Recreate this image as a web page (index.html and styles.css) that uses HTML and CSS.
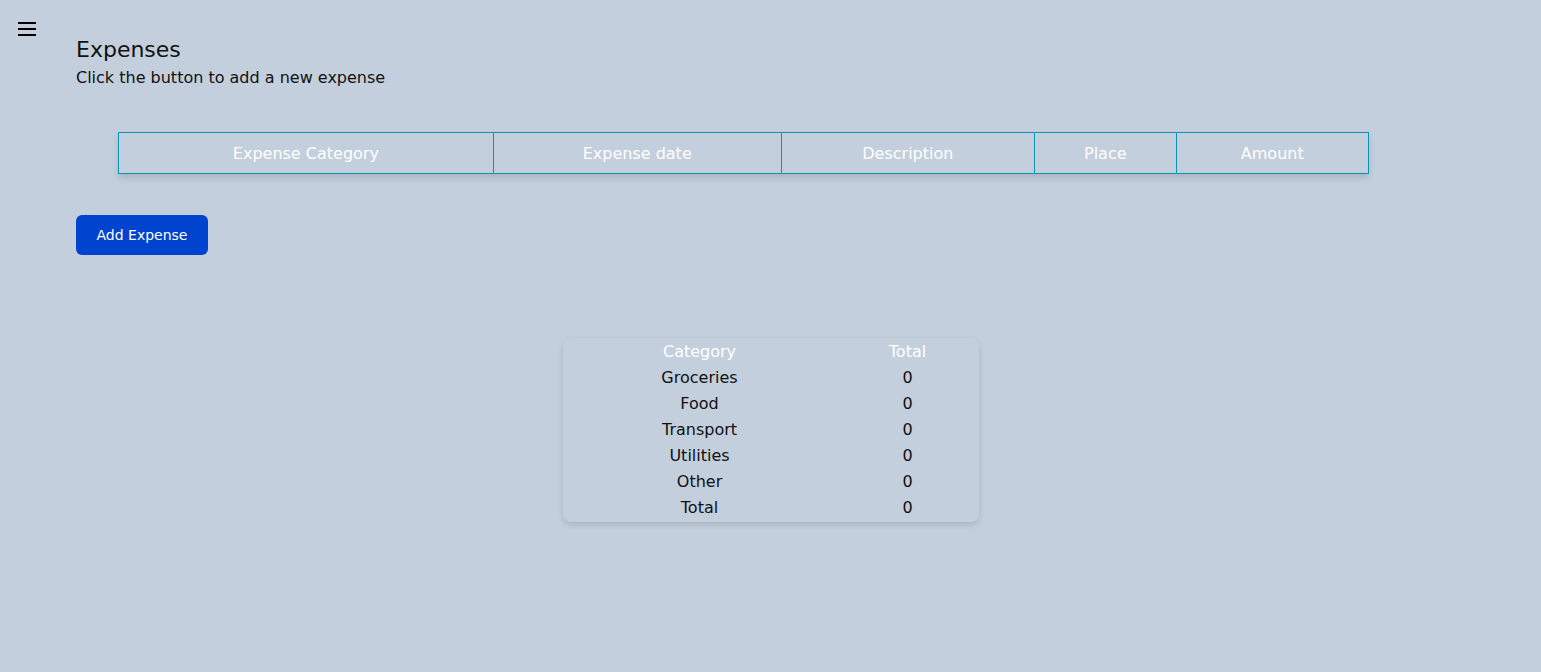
FILE: index.html
```html
<!DOCTYPE html>
<html lang="en">
<head>
<meta charset="utf-8">
<title>Expenses</title>
<link rel="stylesheet" href="styles.css">
</head>
<body>
<div class="page">
  <button class="menu-btn" aria-label="menu">
    <svg width="18" height="15" viewBox="0 0 18 15"><rect x="0" y="0" width="18" height="2" fill="#000"/><rect x="0" y="6" width="18" height="2" fill="#000"/><rect x="0" y="12" width="18" height="2" fill="#000"/></svg>
  </button>
  <main class="content">
    <h1 class="title">Expenses</h1>
    <p class="subtitle">Click the button to add a new expense</p>
    <div class="table-wrap">
      <table class="expense-table">
        <thead>
          <tr>
            <th class="c1">Expense Category</th>
            <th class="c2">Expense date</th>
            <th class="c3">Description</th>
            <th class="c4">Place</th>
            <th class="c5">Amount</th>
          </tr>
        </thead>
      </table>
    </div>
    <button class="add-btn">Add Expense</button>
  </main>
  <section class="summary">
    <table class="summary-table">
      <thead><tr><th>Category</th><th>Total</th></tr></thead>
      <tbody>
        <tr><td>Groceries</td><td>0</td></tr>
        <tr><td>Food</td><td>0</td></tr>
        <tr><td>Transport</td><td>0</td></tr>
        <tr><td>Utilities</td><td>0</td></tr>
        <tr><td>Other</td><td>0</td></tr>
        <tr><td>Total</td><td>0</td></tr>
      </tbody>
    </table>
  </section>
</div>
</body>
</html>
```
FILE: styles.css
```css
html, body {
  margin: 0;
  padding: 0;
  background: #c3cfdd;
  font-family: "DejaVu Sans", "Open Sans", sans-serif;
  color: #111;
}
.page {
  position: relative;
  min-height: 672px;
}
.menu-btn {
  position: absolute;
  left: 18px;
  top: 22px;
  padding: 0;
  border: 0;
  background: none;
  display: block;
  line-height: 0;
}
.content {
  padding: 36px 0 0 76px;
}
.title {
  margin: 0;
  font-weight: 400;
  font-size: 22px;
  line-height: 28px;
  color: #111;
}
.subtitle {
  margin: 0;
  font-size: 16px;
  line-height: 27px;
}
.table-wrap {
  padding: 41px 0 0 42px;
}
.expense-table {
  width: 1251px;
  border-collapse: collapse;
  box-shadow: 0 4px 6px rgba(0, 0, 0, 0.12);
}
.expense-table th {
  border: 1px solid #0996b4;
  color: #fff;
  font-weight: 400;
  font-size: 16px;
  height: 40px;
  padding: 0;
  text-align: center;
}
.c1 { width: 375px; }
.c2 { width: 288px; }
.c3 { width: 253px; }
.c4 { width: 141px; }
.c5 { width: 192px; }
.add-btn {
  display: block;
  margin-top: 41px;
  width: 132px;
  height: 40px;
  border: 0;
  border-radius: 6px;
  background: #0043ce;
  color: #fff;
  font-family: inherit;
  font-size: 14px;
  padding: 0;
}
.summary {
  width: 416px;
  margin: 83px auto 0;
  border-radius: 8px;
  box-shadow: 0 3px 6px rgba(0, 0, 0, 0.12);
  padding: 0 0 2px;
}
.summary-table {
  width: 100%;
  border-collapse: collapse;
  font-size: 16px;
}
.summary-table th, .summary-table td {
  height: 26px;
  padding: 0;
  text-align: center;
  font-weight: 400;
}
.summary-table th { color: #fff; }
.summary-table th:first-child, .summary-table td:first-child { width: 274px; }
```
